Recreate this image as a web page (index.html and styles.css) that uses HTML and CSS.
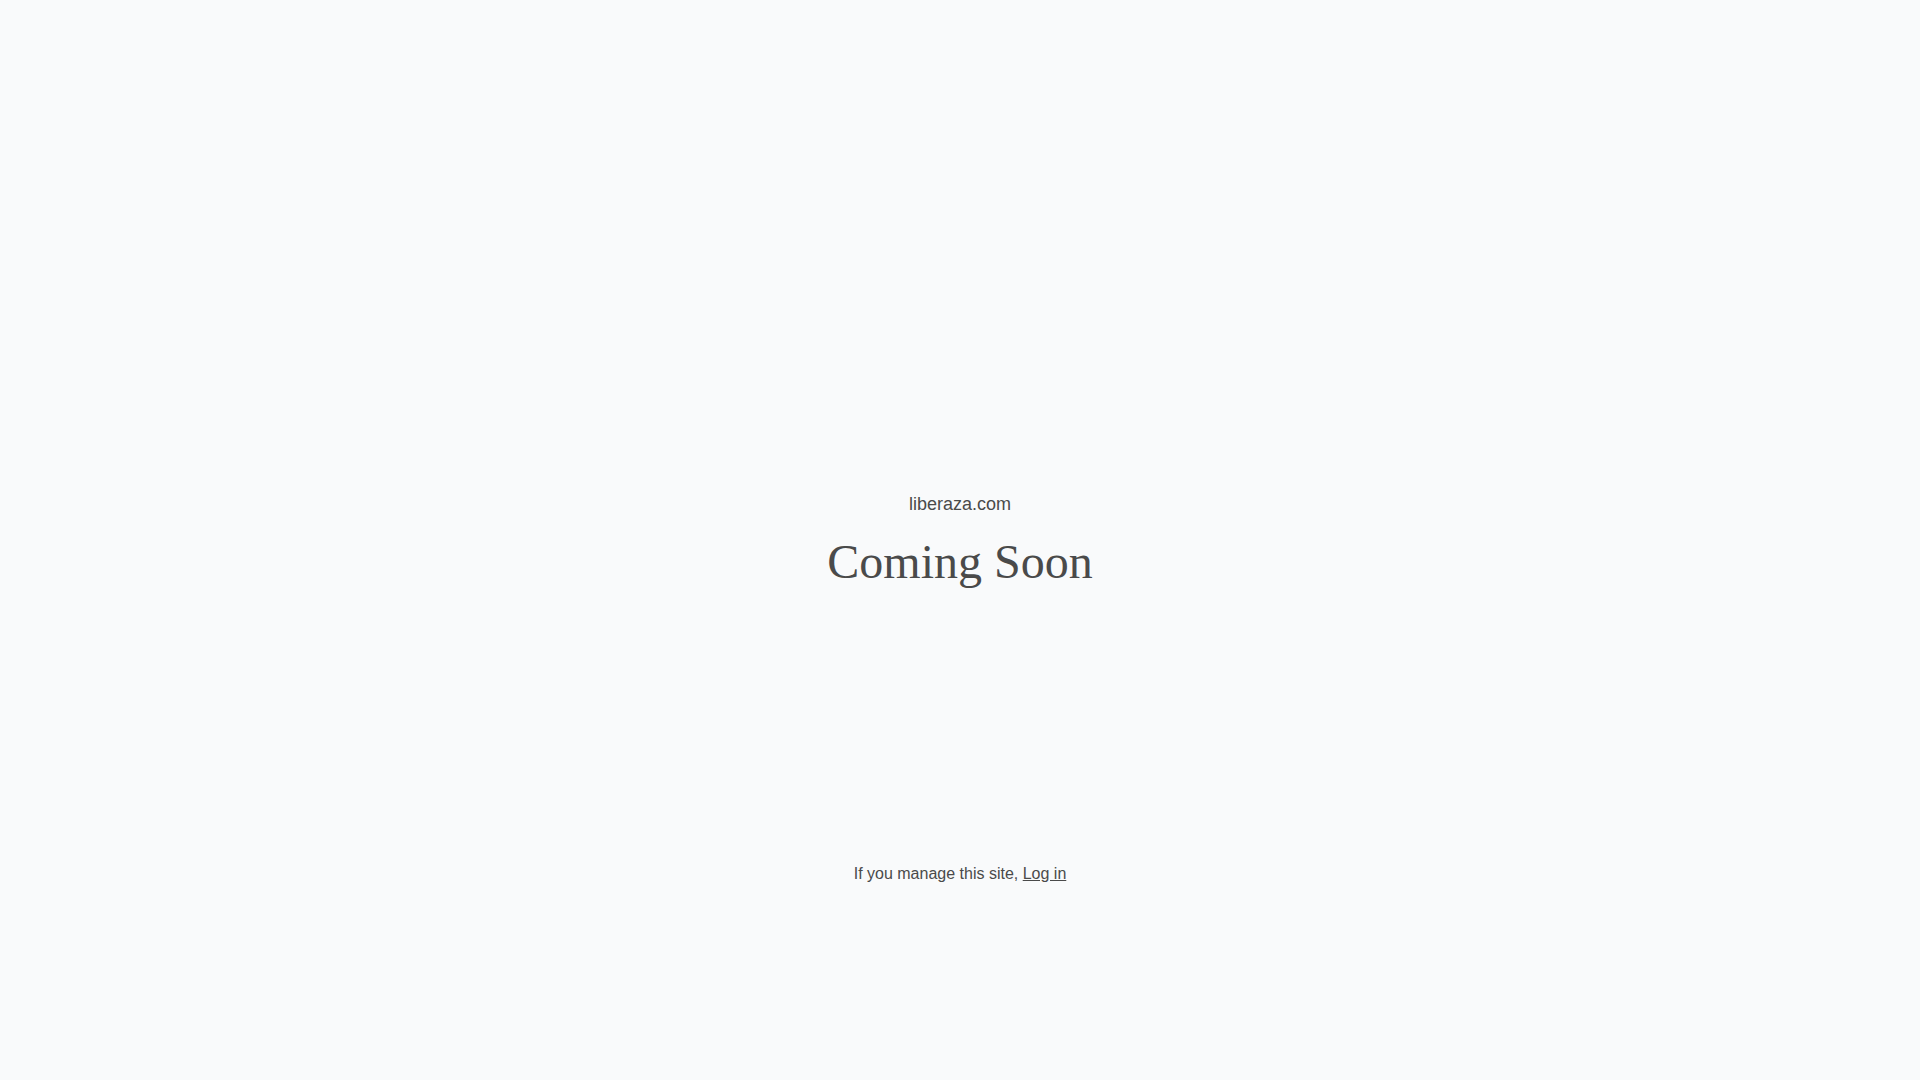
FILE: index.html
```html
<!DOCTYPE html>
<html lang="en">
<head>
<meta charset="utf-8">
<title>liberaza.com</title>
<link rel="stylesheet" href="styles.css">
</head>
<body>
<div class="page">
  <div class="top"></div>
  <div class="intro">
    <div class="site">liberaza.com</div>
    <h1 class="title">Coming Soon</h1>
  </div>
  <div class="bottom">
    <p class="login">If you manage this site, <a href="#">Log in</a></p>
  </div>
</div>
</body>
</html>
```
FILE: styles.css
```css
html, body {
  margin: 0;
  padding: 0;
}
body {
  background: #f9fafb;
  color: #4a4a4a;
  font-family: "Liberation Sans", Arial, sans-serif;
}
.page {
  height: 100vh;
  display: grid;
  grid-template-rows: 1fr auto 1fr;
  justify-items: center;
}
.intro {
  text-align: center;
  padding-top: 3px;
}
.site {
  font-size: 18px;
  line-height: 24px;
}
.title {
  margin: 16px 0 0;
  font-family: "Liberation Serif", "Times New Roman", serif;
  font-weight: normal;
  font-size: 48px;
  line-height: 60px;
}
.bottom {
  padding-top: 270px;
  text-align: center;
}
.login {
  margin: 0;
  font-size: 16px;
  line-height: 24px;
}
.login a {
  color: inherit;
  text-decoration: underline;
}
```
